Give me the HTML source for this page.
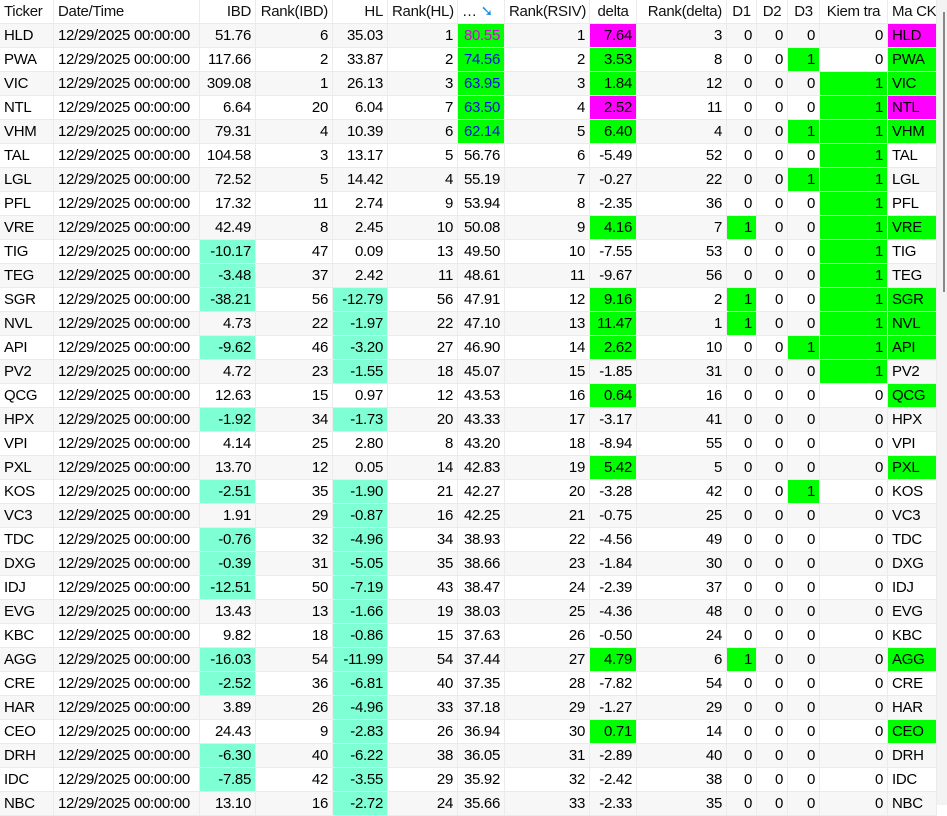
<!DOCTYPE html>
<html><head><meta charset="utf-8"><style>
body{margin:0;width:947px;height:805px;overflow:hidden;background:#fff;font-family:"Liberation Sans",sans-serif;font-size:15px;color:#000;position:relative}
table{border-collapse:separate;border-spacing:0;table-layout:fixed;position:absolute;left:0;top:0;width:937px}
td,th{height:23px;padding:0 4px;border-right:1px solid #ebebeb;border-bottom:1px solid #ebebeb;white-space:nowrap;overflow:hidden;text-align:right;font-weight:normal;line-height:23px;letter-spacing:-0.3px}
th{background:#fff;color:#111}
tr:nth-child(even) td{background:#f7f7f7}
td.l,th.l{text-align:left}
tr td.g{background:#00ff00}
tr td.m{background:#ff00ff}
tr td.a{background:#7fffd4}
.mt{color:#e000e0}.bt{color:#1010e0}
#vs{position:absolute;left:937px;top:0;width:10px;height:805px;background:#f3f3f3}
#vs div{position:absolute;left:6px;top:12px;width:2px;height:280px;background:#888}
</style></head><body>
<table>
<colgroup><col style="width:54px"><col style="width:146px"><col style="width:56px"><col style="width:77px"><col style="width:55px"><col style="width:70px"><col style="width:47px"><col style="width:85px"><col style="width:47px"><col style="width:90px"><col style="width:30px"><col style="width:31px"><col style="width:32px"><col style="width:68px"><col style="width:49px"></colgroup>
<tr><th class="l">Ticker</th><th class="l">Date/Time</th><th>IBD</th><th>Rank(IBD)</th><th>HL</th><th>Rank(HL)</th><th class="l">… <span style="color:#1a8fe0">➘</span></th><th>Rank(RSIV)</th><th style="text-align:center">delta</th><th>Rank(delta)</th><th style="text-align:center">D1</th><th style="text-align:center">D2</th><th style="text-align:center">D3</th><th style="text-align:center">Kiem tra</th><th class="l">Ma CK</th></tr>
<tr><td class="l">HLD</td><td class="l">12/29/2025 00:00:00</td><td>51.76</td><td>6</td><td>35.03</td><td>1</td><td class="g mt">80.55</td><td>1</td><td class="m">7.64</td><td>3</td><td>0</td><td>0</td><td>0</td><td>0</td><td class="l m">HLD</td></tr>
<tr><td class="l">PWA</td><td class="l">12/29/2025 00:00:00</td><td>117.66</td><td>2</td><td>33.87</td><td>2</td><td class="g bt">74.56</td><td>2</td><td class="g">3.53</td><td>8</td><td>0</td><td>0</td><td class="g">1</td><td>0</td><td class="l g">PWA</td></tr>
<tr><td class="l">VIC</td><td class="l">12/29/2025 00:00:00</td><td>309.08</td><td>1</td><td>26.13</td><td>3</td><td class="g bt">63.95</td><td>3</td><td class="g">1.84</td><td>12</td><td>0</td><td>0</td><td>0</td><td class="g">1</td><td class="l g">VIC</td></tr>
<tr><td class="l">NTL</td><td class="l">12/29/2025 00:00:00</td><td>6.64</td><td>20</td><td>6.04</td><td>7</td><td class="g bt">63.50</td><td>4</td><td class="m">2.52</td><td>11</td><td>0</td><td>0</td><td>0</td><td class="g">1</td><td class="l m">NTL</td></tr>
<tr><td class="l">VHM</td><td class="l">12/29/2025 00:00:00</td><td>79.31</td><td>4</td><td>10.39</td><td>6</td><td class="g bt">62.14</td><td>5</td><td class="g">6.40</td><td>4</td><td>0</td><td>0</td><td class="g">1</td><td class="g">1</td><td class="l g">VHM</td></tr>
<tr><td class="l">TAL</td><td class="l">12/29/2025 00:00:00</td><td>104.58</td><td>3</td><td>13.17</td><td>5</td><td>56.76</td><td>6</td><td>-5.49</td><td>52</td><td>0</td><td>0</td><td>0</td><td class="g">1</td><td class="l">TAL</td></tr>
<tr><td class="l">LGL</td><td class="l">12/29/2025 00:00:00</td><td>72.52</td><td>5</td><td>14.42</td><td>4</td><td>55.19</td><td>7</td><td>-0.27</td><td>22</td><td>0</td><td>0</td><td class="g">1</td><td class="g">1</td><td class="l">LGL</td></tr>
<tr><td class="l">PFL</td><td class="l">12/29/2025 00:00:00</td><td>17.32</td><td>11</td><td>2.74</td><td>9</td><td>53.94</td><td>8</td><td>-2.35</td><td>36</td><td>0</td><td>0</td><td>0</td><td class="g">1</td><td class="l">PFL</td></tr>
<tr><td class="l">VRE</td><td class="l">12/29/2025 00:00:00</td><td>42.49</td><td>8</td><td>2.45</td><td>10</td><td>50.08</td><td>9</td><td class="g">4.16</td><td>7</td><td class="g">1</td><td>0</td><td>0</td><td class="g">1</td><td class="l g">VRE</td></tr>
<tr><td class="l">TIG</td><td class="l">12/29/2025 00:00:00</td><td class="a">-10.17</td><td>47</td><td>0.09</td><td>13</td><td>49.50</td><td>10</td><td>-7.55</td><td>53</td><td>0</td><td>0</td><td>0</td><td class="g">1</td><td class="l">TIG</td></tr>
<tr><td class="l">TEG</td><td class="l">12/29/2025 00:00:00</td><td class="a">-3.48</td><td>37</td><td>2.42</td><td>11</td><td>48.61</td><td>11</td><td>-9.67</td><td>56</td><td>0</td><td>0</td><td>0</td><td class="g">1</td><td class="l">TEG</td></tr>
<tr><td class="l">SGR</td><td class="l">12/29/2025 00:00:00</td><td class="a">-38.21</td><td>56</td><td class="a">-12.79</td><td>56</td><td>47.91</td><td>12</td><td class="g">9.16</td><td>2</td><td class="g">1</td><td>0</td><td>0</td><td class="g">1</td><td class="l g">SGR</td></tr>
<tr><td class="l">NVL</td><td class="l">12/29/2025 00:00:00</td><td>4.73</td><td>22</td><td class="a">-1.97</td><td>22</td><td>47.10</td><td>13</td><td class="g">11.47</td><td>1</td><td class="g">1</td><td>0</td><td>0</td><td class="g">1</td><td class="l g">NVL</td></tr>
<tr><td class="l">API</td><td class="l">12/29/2025 00:00:00</td><td class="a">-9.62</td><td>46</td><td class="a">-3.20</td><td>27</td><td>46.90</td><td>14</td><td class="g">2.62</td><td>10</td><td>0</td><td>0</td><td class="g">1</td><td class="g">1</td><td class="l g">API</td></tr>
<tr><td class="l">PV2</td><td class="l">12/29/2025 00:00:00</td><td>4.72</td><td>23</td><td class="a">-1.55</td><td>18</td><td>45.07</td><td>15</td><td>-1.85</td><td>31</td><td>0</td><td>0</td><td>0</td><td class="g">1</td><td class="l">PV2</td></tr>
<tr><td class="l">QCG</td><td class="l">12/29/2025 00:00:00</td><td>12.63</td><td>15</td><td>0.97</td><td>12</td><td>43.53</td><td>16</td><td class="g">0.64</td><td>16</td><td>0</td><td>0</td><td>0</td><td>0</td><td class="l g">QCG</td></tr>
<tr><td class="l">HPX</td><td class="l">12/29/2025 00:00:00</td><td class="a">-1.92</td><td>34</td><td class="a">-1.73</td><td>20</td><td>43.33</td><td>17</td><td>-3.17</td><td>41</td><td>0</td><td>0</td><td>0</td><td>0</td><td class="l">HPX</td></tr>
<tr><td class="l">VPI</td><td class="l">12/29/2025 00:00:00</td><td>4.14</td><td>25</td><td>2.80</td><td>8</td><td>43.20</td><td>18</td><td>-8.94</td><td>55</td><td>0</td><td>0</td><td>0</td><td>0</td><td class="l">VPI</td></tr>
<tr><td class="l">PXL</td><td class="l">12/29/2025 00:00:00</td><td>13.70</td><td>12</td><td>0.05</td><td>14</td><td>42.83</td><td>19</td><td class="g">5.42</td><td>5</td><td>0</td><td>0</td><td>0</td><td>0</td><td class="l g">PXL</td></tr>
<tr><td class="l">KOS</td><td class="l">12/29/2025 00:00:00</td><td class="a">-2.51</td><td>35</td><td class="a">-1.90</td><td>21</td><td>42.27</td><td>20</td><td>-3.28</td><td>42</td><td>0</td><td>0</td><td class="g">1</td><td>0</td><td class="l">KOS</td></tr>
<tr><td class="l">VC3</td><td class="l">12/29/2025 00:00:00</td><td>1.91</td><td>29</td><td class="a">-0.87</td><td>16</td><td>42.25</td><td>21</td><td>-0.75</td><td>25</td><td>0</td><td>0</td><td>0</td><td>0</td><td class="l">VC3</td></tr>
<tr><td class="l">TDC</td><td class="l">12/29/2025 00:00:00</td><td class="a">-0.76</td><td>32</td><td class="a">-4.96</td><td>34</td><td>38.93</td><td>22</td><td>-4.56</td><td>49</td><td>0</td><td>0</td><td>0</td><td>0</td><td class="l">TDC</td></tr>
<tr><td class="l">DXG</td><td class="l">12/29/2025 00:00:00</td><td class="a">-0.39</td><td>31</td><td class="a">-5.05</td><td>35</td><td>38.66</td><td>23</td><td>-1.84</td><td>30</td><td>0</td><td>0</td><td>0</td><td>0</td><td class="l">DXG</td></tr>
<tr><td class="l">IDJ</td><td class="l">12/29/2025 00:00:00</td><td class="a">-12.51</td><td>50</td><td class="a">-7.19</td><td>43</td><td>38.47</td><td>24</td><td>-2.39</td><td>37</td><td>0</td><td>0</td><td>0</td><td>0</td><td class="l">IDJ</td></tr>
<tr><td class="l">EVG</td><td class="l">12/29/2025 00:00:00</td><td>13.43</td><td>13</td><td class="a">-1.66</td><td>19</td><td>38.03</td><td>25</td><td>-4.36</td><td>48</td><td>0</td><td>0</td><td>0</td><td>0</td><td class="l">EVG</td></tr>
<tr><td class="l">KBC</td><td class="l">12/29/2025 00:00:00</td><td>9.82</td><td>18</td><td class="a">-0.86</td><td>15</td><td>37.63</td><td>26</td><td>-0.50</td><td>24</td><td>0</td><td>0</td><td>0</td><td>0</td><td class="l">KBC</td></tr>
<tr><td class="l">AGG</td><td class="l">12/29/2025 00:00:00</td><td class="a">-16.03</td><td>54</td><td class="a">-11.99</td><td>54</td><td>37.44</td><td>27</td><td class="g">4.79</td><td>6</td><td class="g">1</td><td>0</td><td>0</td><td>0</td><td class="l g">AGG</td></tr>
<tr><td class="l">CRE</td><td class="l">12/29/2025 00:00:00</td><td class="a">-2.52</td><td>36</td><td class="a">-6.81</td><td>40</td><td>37.35</td><td>28</td><td>-7.82</td><td>54</td><td>0</td><td>0</td><td>0</td><td>0</td><td class="l">CRE</td></tr>
<tr><td class="l">HAR</td><td class="l">12/29/2025 00:00:00</td><td>3.89</td><td>26</td><td class="a">-4.96</td><td>33</td><td>37.18</td><td>29</td><td>-1.27</td><td>29</td><td>0</td><td>0</td><td>0</td><td>0</td><td class="l">HAR</td></tr>
<tr><td class="l">CEO</td><td class="l">12/29/2025 00:00:00</td><td>24.43</td><td>9</td><td class="a">-2.83</td><td>26</td><td>36.94</td><td>30</td><td class="g">0.71</td><td>14</td><td>0</td><td>0</td><td>0</td><td>0</td><td class="l g">CEO</td></tr>
<tr><td class="l">DRH</td><td class="l">12/29/2025 00:00:00</td><td class="a">-6.30</td><td>40</td><td class="a">-6.22</td><td>38</td><td>36.05</td><td>31</td><td>-2.89</td><td>40</td><td>0</td><td>0</td><td>0</td><td>0</td><td class="l">DRH</td></tr>
<tr><td class="l">IDC</td><td class="l">12/29/2025 00:00:00</td><td class="a">-7.85</td><td>42</td><td class="a">-3.55</td><td>29</td><td>35.92</td><td>32</td><td>-2.42</td><td>38</td><td>0</td><td>0</td><td>0</td><td>0</td><td class="l">IDC</td></tr>
<tr><td class="l">NBC</td><td class="l">12/29/2025 00:00:00</td><td>13.10</td><td>16</td><td class="a">-2.72</td><td>24</td><td>35.66</td><td>33</td><td>-2.33</td><td>35</td><td>0</td><td>0</td><td>0</td><td>0</td><td class="l">NBC</td></tr>
</table>
<div id="vs"><div></div></div>
</body></html>
